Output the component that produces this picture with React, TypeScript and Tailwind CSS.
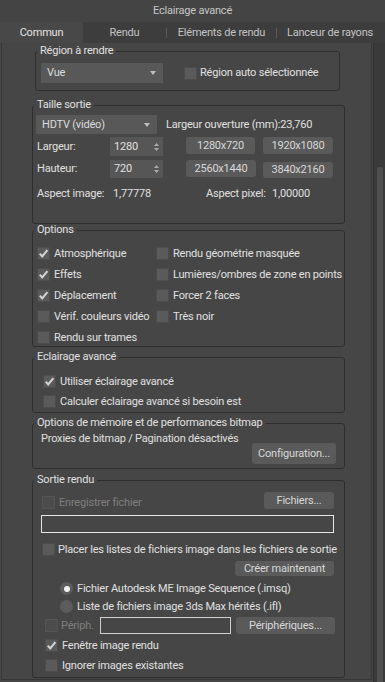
import type { ReactNode } from 'react';
import clsx from 'clsx';

function Check({ checked = false, disabled = false }: { checked?: boolean; disabled?: boolean }) {
  return (
    <span
      className={clsx(
        'w-[13px] h-[13px] shrink-0 flex items-center justify-center border',
        disabled ? 'bg-[#4c4c4c] border-[#545454]' : 'bg-[#5a5a5a] border-[#4c4c4c]'
      )}
    >
      {checked && (
        <svg width="11" height="11" viewBox="0 0 11 11">
          <path d="M1.8 5.6 L4.2 8.4 L9.4 2.2" fill="none" stroke="#d2d2d2" strokeWidth="2.1" />
        </svg>
      )}
    </span>
  );
}

function Radio({ on = false }: { on?: boolean }) {
  return (
    <span className="w-[13px] h-[13px] shrink-0 rounded-full bg-[#5c5c5c] flex items-center justify-center">
      {on && <span className="w-[6px] h-[6px] rounded-full bg-[#f0f0f0]" />}
    </span>
  );
}

function Btn({ children, className }: { children: ReactNode; className?: string }) {
  return (
    <div className={clsx('shrink-0 rounded-[3px] bg-[#5a5a5a] text-[#d8d8d8] flex items-center justify-center', className)}>
      {children}
    </div>
  );
}

function Dropdown({ label, className }: { label: string; className?: string }) {
  return (
    <div className={clsx('shrink-0 bg-[#585858] flex items-center justify-between pl-[6px] pr-[7px] text-[#dcdcdc]', className)}>
      <span>{label}</span>
      <svg width="6" height="4" viewBox="0 0 6 4">
        <path d="M0 0 H6 L3 4 Z" fill="#bdbdbd" />
      </svg>
    </div>
  );
}

function Spinner({ value }: { value: string }) {
  return (
    <div className="w-[53px] h-full shrink-0 bg-[#565656] flex items-center pl-[4px] pr-[4px]">
      <span>{value}</span>
      <svg className="ml-auto" width="5" height="8" viewBox="0 0 5 8">
        <path d="M0 3 L2.5 0 L5 3 Z M0 5 L2.5 8 L5 5 Z" fill="#aaaaaa" />
      </svg>
    </div>
  );
}

function Group({ title, className, children }: { title: string; className?: string; children: ReactNode }) {
  return (
    <fieldset className={clsx('min-w-0 shrink-0 border border-[#2e2e2e] rounded-[3px] flex flex-col', className)}>
      <legend className="ml-[1px] px-[3px] leading-[12px]">{title}</legend>
      {children}
    </fieldset>
  );
}

const options: [string, boolean, string][] = [
  ['Atmosphérique', true, 'Rendu géométrie masquée'],
  ['Effets', true, 'Lumières/ombres de zone en points'],
  ['Déplacement', true, 'Forcer 2 faces'],
  ['Vérif. couleurs vidéo', false, 'Très noir'],
];

export default function App() {
  return (
    <div className="w-[385px] h-[682px] overflow-hidden bg-[#444444] font-['Roboto',sans-serif] text-[11px] leading-[16px] tracking-[-0.2px] text-[#e0e0e0] flex flex-col">
      {/* title bar */}
      <div className="h-[22px] shrink-0 flex items-center justify-center text-[#c6c6c6]">Eclairage avancé</div>

      {/* tabs */}
      <div className="h-[21px] shrink-0 flex items-center bg-[#3d3d3d] text-[#c4c4c4]">
        <div className="w-[83px] h-full bg-[#484848] text-[#e4e4e4] flex items-center justify-center">Commun</div>
        <div className="w-[83px] flex justify-center">Rendu</div>
        <div className="w-px h-[10px] bg-[#5a5a5a]" />
        <div className="w-[109px] flex justify-center">Eléments de rendu</div>
        <div className="w-px h-[10px] bg-[#5a5a5a]" />
        <div className="flex-1 flex justify-center pr-[2px]">Lanceur de rayons</div>
      </div>

      <div className="flex-1 flex min-h-0">
        <div className="w-[373px] bg-[#464646]">
          <div className="ml-[1px] w-[371px] h-[637px] border-x border-b border-[#373737] pt-[2px] flex flex-col">
            {/* Région à rendre */}
            <Group title="Région à rendre" className="ml-[33px] w-[305px]">
              <div className="flex items-center mt-[6px] pl-[5px] pb-[7px]">
                <Dropdown label="Vue" className="w-[122px] h-[20px]" />
                <div className="ml-[21px] flex items-center">
                  <Check />
                  <span className="ml-[3px]">Région auto sélectionnée</span>
                </div>
              </div>
            </Group>

            {/* Taille sortie */}
            <Group title="Taille sortie" className="ml-[30px] w-[313px] mt-[8px]">
              <div className="pl-[3px] pb-[21px] flex flex-col">
                <div className="flex items-center mt-[4px]">
                  <Dropdown label="HDTV (vidéo)" className="w-[121px] h-[19px]" />
                  <span className="ml-[9px]">Largeur ouverture (mm):23,760</span>
                </div>
                <div className="flex items-start h-[19px] mt-[3px]">
                  <span className="ml-[1px] w-[73px] shrink-0 self-center">Largeur:</span>
                  <Spinner value="1280" />
                  <Btn className="ml-[23px] w-[69px] h-[17px]">1280x720</Btn>
                  <Btn className="ml-[8px] w-[70px] h-[17px]">1920x1080</Btn>
                </div>
                <div className="flex items-start h-[18px] mt-[4px]">
                  <span className="ml-[1px] w-[73px] shrink-0 self-center">Hauteur:</span>
                  <Spinner value="720" />
                  <Btn className="ml-[23px] w-[70px] h-[17px]">2560x1440</Btn>
                  <Btn className="ml-[7px] w-[70px] h-[16px] mt-[2px]">3840x2160</Btn>
                </div>
                <div className="flex mt-[8px]">
                  <span className="ml-[1px] w-[76px] shrink-0">Aspect image:</span>
                  <span className="w-[93px] shrink-0">1,77778</span>
                  <span className="w-[66px] shrink-0">Aspect pixel:</span>
                  <span>1,00000</span>
                </div>
              </div>
            </Group>

            {/* Options */}
            <Group title="Options" className="ml-[30px] w-[313px]">
              <div className="grid grid-cols-[119px_1fr] gap-y-[8px] mt-[11px] pl-[4px] pb-[2px]">
                {options.flatMap(([a, on, b]) => [
                  <div key={a} className="flex items-center h-[13px] whitespace-nowrap">
                    <Check checked={on} />
                    <span className="ml-[4px]">{a}</span>
                  </div>,
                  <div key={b} className="flex items-center h-[13px] whitespace-nowrap">
                    <Check />
                    <span className="ml-[4px]">{b}</span>
                  </div>,
                ])}
                <div className="flex items-center h-[13px] whitespace-nowrap">
                  <Check />
                  <span className="ml-[4px]">Rendu sur trames</span>
                </div>
              </div>
            </Group>

            {/* Eclairage avancé */}
            <Group title="Eclairage avancé" className="ml-[30px] w-[313px] mt-[4px]">
              <div className="flex flex-col gap-[7px] mt-[12px] pl-[10px] pb-[4px]">
                <div className="flex items-center h-[13px]">
                  <Check checked />
                  <span className="ml-[4px]">Utiliser éclairage avancé</span>
                </div>
                <div className="flex items-center h-[13px]">
                  <Check />
                  <span className="ml-[4px]">Calculer éclairage avancé si besoin est</span>
                </div>
              </div>
            </Group>

            {/* Mémoire */}
            <Group title="Options de mémoire et de performances bitmap" className="ml-[30px] w-[313px] mt-[4px]">
              <div className="flex flex-col pb-[4px]">
                <span className="mt-[4px] pl-[8px] leading-[12px]">Proxies de bitmap / Pagination désactivés</span>
                <Btn className="self-end mr-[8px] -mt-[2px] w-[84px] h-[21px]">Configuration...</Btn>
              </div>
            </Group>

            {/* Sortie rendu */}
            <Group title="Sortie rendu" className="ml-[30px] w-[313px] mt-[5px]">
              <div className="flex flex-col pl-[8px] pr-[10px] pb-[5px]">
                <div className="flex items-end h-[17px] mt-[6px]">
                  <div className="flex items-center h-[13px] ml-[1px]">
                    <Check disabled />
                    <span className="ml-[4px] text-[#7f7f7f]">Enregistrer fichier</span>
                  </div>
                  <Btn className="ml-auto w-[70px] h-[17px]">Fichiers...</Btn>
                </div>
                <div className="mt-[6px] h-[18px] border border-[#e6e6e6]" />
                <div className="flex items-center h-[13px] mt-[10px] ml-[1px] whitespace-nowrap">
                  <Check />
                  <span className="ml-[3px]">Placer les listes de fichiers image dans les fichiers de sortie</span>
                </div>
                <Btn className="self-end mt-[5px] w-[99px] h-[15px]">Créer maintenant</Btn>
                <div className="flex items-center h-[13px] mt-[6px] ml-[19px]">
                  <Radio on />
                  <span className="ml-[4px]">Fichier Autodesk ME Image Sequence (.imsq)</span>
                </div>
                <div className="flex items-center h-[13px] mt-[5px] ml-[19px]">
                  <Radio />
                  <span className="ml-[4px]">Liste de fichiers image 3ds Max hérités (.ifl)</span>
                </div>
                <div className="flex items-center h-[17px] mt-[4px]">
                  <span className="ml-[4px]">
                    <Check disabled />
                  </span>
                  <span className="ml-[3px] w-[39px] shrink-0 text-[#7f7f7f]">Périph.</span>
                  <div className="w-[131px] h-[17px] shrink-0 border border-[#cfcfcf]" />
                  <Btn className="ml-[5px] w-[99px] h-[17px]">Périphériques...</Btn>
                </div>
                <div className="flex items-center h-[13px] mt-[5px] ml-[4px]">
                  <Check checked />
                  <span className="ml-[4px]">Fenêtre image rendu</span>
                </div>
                <div className="flex items-center h-[13px] mt-[7px] ml-[4px]">
                  <Check />
                  <span className="ml-[4px]">Ignorer images existantes</span>
                </div>
              </div>
            </Group>
          </div>
        </div>

        {/* scrollbar */}
        <div className="w-[12px] bg-[#3a3a3a] border-l border-[#303030] flex flex-col">
          <div className="mt-[124px] ml-[3px] w-[6px] flex-1 bg-[#4f4f4f] rounded-t-[2px]" />
        </div>
      </div>
    </div>
  );
}
